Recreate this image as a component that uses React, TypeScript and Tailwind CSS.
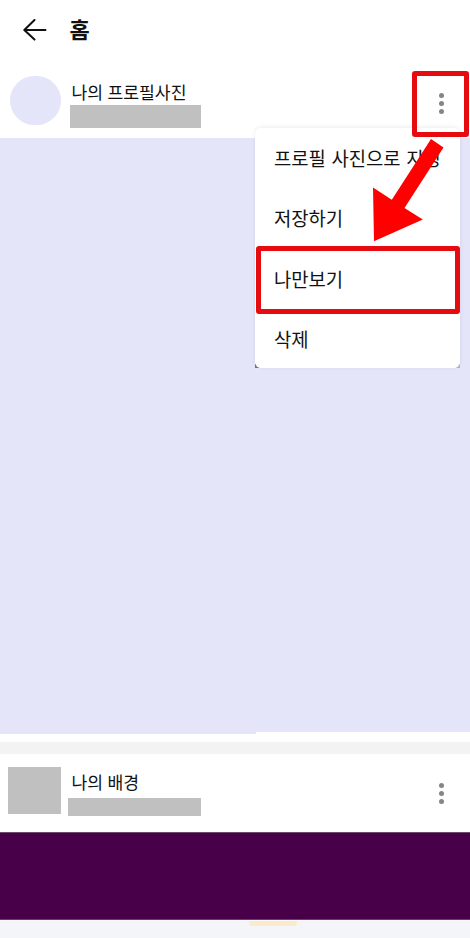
const font = 'font-[Roboto,"Noto_Sans_CJK_KR",sans-serif]';

const menuItems = [
  { label: '프로필 사진으로 지정' },
  { label: '저장하기' },
  { label: '나만보기', marked: true },
  { label: '삭제' },
];

function BackArrow() {
  return (
    <svg width="24" height="22" viewBox="0 0 24 22" fill="none" stroke="#111" strokeWidth="2" strokeLinecap="round" strokeLinejoin="round">
      <path d="M11.5 1 1.3 11l10.2 9.6M1.5 11h21" />
    </svg>
  );
}

function MoreButton() {
  return (
    <button className="flex w-[10px] flex-col items-center gap-[3px]" aria-label="더보기">
      {[0, 1, 2].map(i => (
        <span key={i} className="h-[5px] w-[5px] rounded-full bg-[#858585]" />
      ))}
    </button>
  );
}

function PostMenu() {
  return (
    <div className="absolute left-[255px] top-[128px] h-[240px] w-[205px]">
      <span className="absolute bottom-0 left-0 h-1 w-1 bg-[#777780]" />
      <span className="absolute bottom-0 right-0 h-1 w-1 bg-[#b4b4c0]" />
      <ul className="relative h-[239.5px] rounded-[6px] bg-white shadow-[0_-1px_4px_rgba(0,0,0,0.08)]">
        {menuItems.map(item => (
          <li key={item.label} className="relative flex h-[60.5px] items-center pl-[19px] pt-1 text-[18.8px] leading-none text-[#111]">
            <span className="whitespace-nowrap [word-spacing:1px]">{item.label}</span>
            {item.marked && (
              <span className="absolute left-px top-[-3px] h-[68px] w-[204px] rounded-[3px] border-[5px] border-[#e60b0e]" />
            )}
          </li>
        ))}
      </ul>
    </div>
  );
}

function Pointer() {
  return (
    <svg className="absolute left-[370px] top-[136px]" width="80" height="110" viewBox="370 136 80 110">
      <path d="M431 139 443.5 147.5 404.5 208 422.8 219.5 374 241.2 373 187.5 391.8 199.7Z" fill="#ff0000" />
    </svg>
  );
}

export default function App() {
  return (
    <div className={`relative flex h-[938px] w-[470px] flex-col overflow-hidden bg-white text-[#111] ${font}`}>
      <header className="flex h-[60px] items-center pl-[22.5px]">
        <BackArrow />
        <h1 className="ml-[23px] pt-[2px] text-[22px] font-bold leading-none">홈</h1>
      </header>

      <section className="flex h-[78px] pl-[10px] pt-[15.5px]">
        <div className="h-[49px] w-[51px] rounded-full bg-[#e4e5f9]" />
        <div className="ml-[9px] grow pt-[8px]">
          <p className="ml-[1.5px] text-[17.2px] leading-[18px]">나의 프로필사진</p>
          <div className="mt-[3.5px] h-[23px] w-[131px] bg-[#c0c0c0]" />
        </div>
        <div className="mr-6 pt-[17.5px]">
          <MoreButton />
        </div>
      </section>

      <div className="flex h-[604px]">
        <div className="h-[596px] w-[256px] bg-[#e4e5f9]" />
        <div className="h-[594px] grow bg-[#e4e5f9]" />
      </div>

      <div className="h-3 bg-[#f3f3f3]" />

      <section className="flex h-[78px] pl-[8px] pt-[12.5px]">
        <div className="h-[47px] w-[52.5px] bg-[#c0c0c0]" />
        <div className="ml-[7px] grow pt-[7px]">
          <p className="ml-[4px] text-[17.2px] leading-[18px]">나의 배경</p>
          <div className="mt-[6.5px] h-[17.5px] w-[133px] bg-[#c0c0c0]" />
        </div>
        <div className="mr-6 pt-[16px]">
          <MoreButton />
        </div>
      </section>

      <div className="h-[88px] border-y border-t-[#6b4a6c] border-b-[#6b3a65] bg-[#480048]" />
      <footer className="h-[18px] border-t border-[#fdf8fa] bg-[#f4f5f9]">
        <div className="ml-[249px] h-[5px] w-[48px] rounded-b-[3px] bg-[#faebcd]" />
      </footer>

      <PostMenu />
      <div className="absolute left-[412px] top-[71px] h-[66px] w-[57px] rounded-[3px] border-[5px] border-[#e60b0e]" />
      <Pointer />
    </div>
  );
}
